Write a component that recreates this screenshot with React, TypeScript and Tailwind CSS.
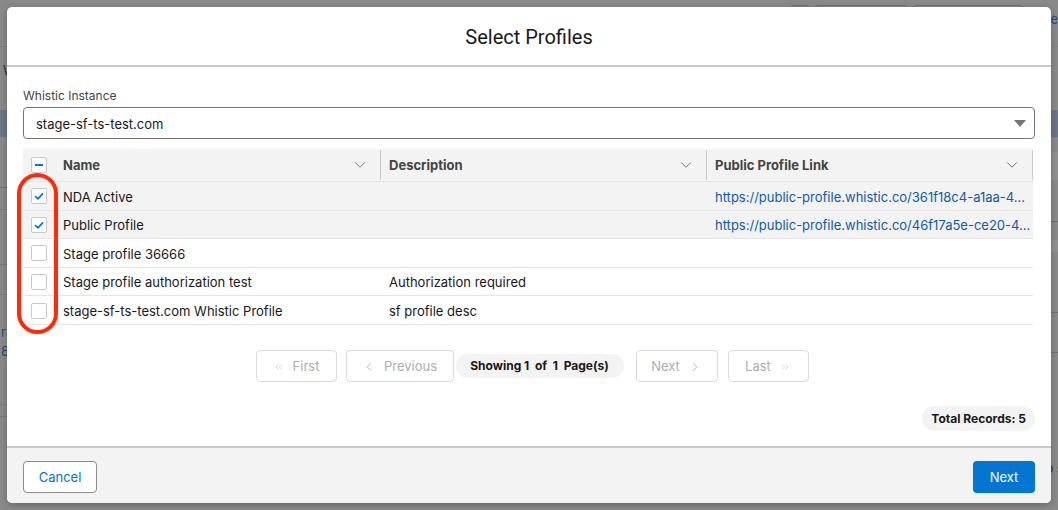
import { ChevronDown, ChevronLeft, ChevronRight, ChevronsLeft, ChevronsRight } from "lucide-react";

const profiles = [
  {
    name: "NDA Active",
    description: "",
    link: "https://public-profile.whistic.co/361f18c4-a1aa-4…",
    selected: true,
  },
  {
    name: "Public Profile",
    description: "",
    link: "https://public-profile.whistic.co/46f17a5e-ce20-4…",
    selected: true,
  },
  { name: "Stage profile 36666", description: "", link: "", selected: false },
  {
    name: "Stage profile authorization test",
    description: "Authorization required",
    link: "",
    selected: false,
  },
  {
    name: "stage-sf-ts-test.com Whistic Profile",
    description: "sf profile desc",
    link: "",
    selected: false,
  },
];

function Checkbox({ state }: { state: "on" | "off" | "some" }) {
  return (
    <span className="flex h-4 w-4 items-center justify-center rounded-[2px] border border-[#c9c9c9] bg-white">
      {state === "on" && (
        <svg width="10" height="10" viewBox="0 0 10 10" fill="none">
          <path d="M1.6 5.6 L4 7.8 L8.6 2.8" stroke="#0176d3" strokeWidth="1.7" strokeLinecap="round" strokeLinejoin="round" />
        </svg>
      )}
      {state === "some" && <span className="h-[2px] w-2 bg-[#0176d3]" />}
    </span>
  );
}

function PageButton({ children, width }: { children: React.ReactNode; width: string }) {
  return (
    <button
      type="button"
      disabled
      className={`flex h-8 items-center justify-center gap-2 rounded-[4px] border border-[#dddbda] bg-white pt-[2px] text-[13px] text-[#aeaeae] ${width}`}
    >
      {children}
    </button>
  );
}

function Backdrop() {
  return (
    <div className="flex h-full flex-col text-[13px]">
      <div className="flex h-[47px] shrink-0 items-start justify-end border-b border-[#7d7d7d] pt-[5px]">
        <div className="mr-[2px] flex gap-[4px]">
          <span className="h-8 w-[20px] rounded-[4px] border border-[#6f6f6f]" />
          <span className="h-8 w-[94px] rounded-[4px] border border-[#6f6f6f]" />
          <span className="h-8 w-[112px] rounded-[4px] border border-[#6f6f6f]" />
        </div>
        <span className="w-[32px] pt-[5px] text-right text-[#1d4f86]">More</span>
      </div>
      <div className="flex flex-1">
        <div className="flex w-[300px] flex-col">
          <div className="h-[63px] pl-[3px] pt-[14px] text-[#2b2b2b]">Whistic</div>
          <div className="h-[27px] bg-[#6b7586]" />
          <div className="h-[51px] border-b border-[#6f6f6f]" />
          <div className="h-[22px] border-b border-[#7a7a7a]" />
          <div className="h-[55px] border-b border-[#7a7a7a]" />
          <div className="h-[30px] border-b border-[#7a7a7a]" />
          <div className="flex h-[82px] flex-col pt-[28px] leading-[19px] text-[#1d4f86]">
            <span className="pl-[1px]">ra</span>
            <span className="pl-[1px]">8</span>
          </div>
          <div className="h-[28px] border-b border-[#7a7a7a]" />
          <div className="h-[12px] border-b border-[#7a7a7a]" />
        </div>
        <div className="flex-1" />
        <div className="flex w-[100px] flex-col">
          <div className="h-[63px]" />
          <div className="h-[27px] bg-[#6b7586]" />
          <div className="h-[15px]" />
          <div className="h-[28px] bg-[#909090]" />
          <div className="h-[42px] border-b border-[#6f6f6f]" />
          <div className="h-[18px]" />
          <div className="h-[12px] bg-[#909090]" />
          <div className="h-[61px] border-b border-[#6f6f6f]" />
          <div className="h-[40px] border-b border-[#6f6f6f] pl-[12px]">
            <span className="block h-full w-[110px] border-x border-[#6f6f6f]" />
          </div>
          <div className="h-[28px] pl-[10px] pt-[10px] text-[#2b2b2b]">•</div>
          <div className="h-[40px] pl-[10px] pt-[12px] text-[#1d4f86]">Ref</div>
          <div className="h-[38px]" />
          <div className="whitespace-nowrap pl-[4px] text-[#2b2b2b]">No activities to show</div>
        </div>
      </div>
    </div>
  );
}

export default function App() {
  return (
    <div className="relative h-[510px] w-full overflow-hidden bg-[#898989] font-['Inter','Liberation_Sans',sans-serif]">
      <div className="absolute inset-0 overflow-hidden">
        <Backdrop />
      </div>

      <div className="absolute left-[7px] top-[7px] w-[1044px] overflow-hidden rounded-[5px] bg-white shadow-[0_2px_6px_rgba(0,0,0,0.25)]">
        <div className="flex h-[60px] items-center justify-center border-b-2 border-[#c9c9c9] pt-[2px] font-['Roboto',sans-serif] text-[20px] text-[#181818]">
          Select Profiles
        </div>

        <div className="px-4 pb-[15px] pt-[20px]">
          <label className="mb-[2px] block text-[12px] leading-[18px] text-[#444444]">Whistic Instance</label>
          <div className="flex h-8 items-center justify-between rounded-[4px] border border-[#747474] pl-3 pr-[8px] text-[13px] text-[#181818]">
            <span className="pt-[3px]">stage-sf-ts-test.com</span>
            <svg width="12" height="7" viewBox="0 0 12 7">
              <path d="M0 0 H12 L6 7 Z" fill="#747474" />
            </svg>
          </div>

          <div className="mr-[2px] mt-[10px] text-[13px]">
            <div className="grid h-[33px] grid-cols-[32px_325px_326px_1fr] border-b border-[#e5e5e5] bg-[#f3f3f3] font-bold text-[#444444]">
              <div className="flex items-center pl-[8px]">
                <Checkbox state="some" />
              </div>
              {["Name", "Description", "Public Profile Link"].map((label, i) => (
                <div
                  key={label}
                  className={`my-[1px] flex items-center justify-between pl-[8px] pr-[11px] ${i > 0 ? "border-l border-[#c9c9c9]" : ""} ${i === 2 ? "border-r border-[#c9c9c9]" : ""}`}
                >
                  <span className="pt-[2px]">{label}</span>
                  <ChevronDown size={18} strokeWidth={1.3} color="#747474" />
                </div>
              ))}
            </div>

            {profiles.map((p) => (
              <div
                key={p.name}
                className={`grid h-[28.6px] grid-cols-[32px_325px_326px_1fr] border-b border-[#e5e5e5] text-[#181818] ${p.selected ? "bg-[#f3f3f3]" : "bg-white"}`}
              >
                <div className="flex items-center pl-[8px] pt-[1px]">
                  <Checkbox state={p.selected ? "on" : "off"} />
                </div>
                <div className="flex items-center pl-[8px] pt-[3px]">{p.name}</div>
                <div className="flex items-center pl-[9px] pt-[3px]">{p.description}</div>
                <div className="flex min-w-0 items-center pl-[9px] pt-[3px]">
                  <span className="whitespace-nowrap text-[#0b5cab]">{p.link}</span>
                </div>
              </div>
            ))}
          </div>

          <div className="mt-[25px] flex justify-center pl-[6px]">
            <PageButton width="w-[81px] mr-[9px]">
              <ChevronsLeft size={12} strokeWidth={1.5} color="#c9c9c9" />
              First
            </PageButton>
            <PageButton width="w-[108px] mr-[2px]">
              <ChevronLeft size={14} strokeWidth={1.5} color="#aeaeae" />
              Previous
            </PageButton>
            <div className="mr-[12px] mt-[4px] flex h-[24px] w-[168px] items-center justify-center rounded-full bg-[#f3f3f3] pt-[1px] text-[12px] font-bold text-[#181818]">
              Showing 1&nbsp; of&nbsp; 1&nbsp; Page(s)
            </div>
            <PageButton width="w-[82px] mr-[10px]">
              Next
              <ChevronRight size={14} strokeWidth={1.5} color="#aeaeae" />
            </PageButton>
            <PageButton width="w-[81px]">
              Last
              <ChevronsRight size={12} strokeWidth={1.5} color="#c9c9c9" />
            </PageButton>
          </div>

          <div className="mt-[24px] flex justify-end">
            <span className="flex h-[25px] items-center rounded-full bg-[#f3f3f3] px-[9px] pt-[2px] text-[12px] font-bold text-[#181818]">
              Total Records: 5
            </span>
          </div>
        </div>

        <div className="flex items-start justify-between border-t-2 border-[#c9c9c9] bg-[#f3f3f3] px-4 pb-[10px] pt-[13px] text-[13px]">
          <button type="button" className="h-8 w-[74px] rounded-[4px] border border-[#8c8c8c] bg-white pt-[2px] text-[#0176d3]">
            Cancel
          </button>
          <button type="button" className="h-8 w-[62px] rounded-[4px] bg-[#0176d3] pt-[2px] text-white">
            Next
          </button>
        </div>

        <div className="pointer-events-none absolute left-[10px] top-[166px] h-[161px] w-[41px] rounded-full border-[4px] border-[#ff2a0a]" />
      </div>
    </div>
  );
}
